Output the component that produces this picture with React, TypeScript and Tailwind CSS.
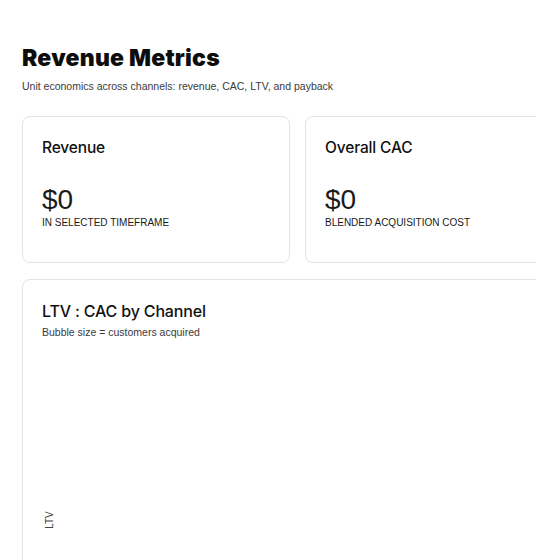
import React from "react";

interface StatCardProps {
  title: string;
  value: string;
  caption: string;
}

const titleFont = { fontFamily: "Inter, 'Liberation Sans', sans-serif" };

const StatCard: React.FunctionComponent<StatCardProps> = ({ title, value, caption }) => {
  return (
    <div className="w-[268px] h-[147px] shrink-0 rounded-lg border border-[#e4e4e4] bg-white px-[19px] pt-[21px]">
      <h2 className="text-[15.5px] leading-5 font-medium tracking-[-0.01em] text-[#111]" style={titleFont}>
        {title}
      </h2>
      <div className="mt-[26px] text-[28px] leading-8 text-[#1a1a1a]">{value}</div>
      <p className="mt-[-1px] text-[10px] leading-4 uppercase text-[#1a1a1a]">{caption}</p>
    </div>
  );
};

const App = () => {
  return (
    <div
      className="w-[536px] h-[560px] overflow-hidden bg-white"
      style={{ fontFamily: "'Liberation Sans', Arial, sans-serif" }}
    >
      <div className="w-[1100px] pl-[22px] pt-[44px]">
        <h1 className="text-[23px] leading-7 font-black tracking-[0.01em] text-[#0d0d0d]" style={titleFont}>
          Revenue Metrics
        </h1>
        <p className="mt-[6px] text-[10.5px] leading-4 text-[#3a3a3a]">
          Unit economics across channels: revenue, CAC, LTV, and payback
        </p>

        <div className="mt-[22px] flex gap-[15px]">
          <StatCard title="Revenue" value="$0" caption="In selected timeframe" />
          <StatCard title="Overall CAC" value="$0" caption="Blended acquisition cost" />
        </div>

        <div className="mt-4 h-[400px] w-[900px] rounded-lg border border-[#e4e4e4] bg-white px-[19px] pt-[19px]">
          <h2 className="text-[16px] leading-6 font-medium tracking-[-0.01em] text-[#111]" style={titleFont}>
            LTV : CAC by Channel
          </h2>
          <p className="mt-[1px] text-[10.5px] leading-4 text-[#3a3a3a]">
            Bubble size = customers acquired
          </p>
          <div className="mt-[160px] flex h-[60px] items-start">
            <span className="mt-[14px] -ml-[1px] inline-block -rotate-90 text-[10px] leading-3 text-[#444]">
              LTV
            </span>
          </div>
        </div>
      </div>
    </div>
  );
};

export default App;
